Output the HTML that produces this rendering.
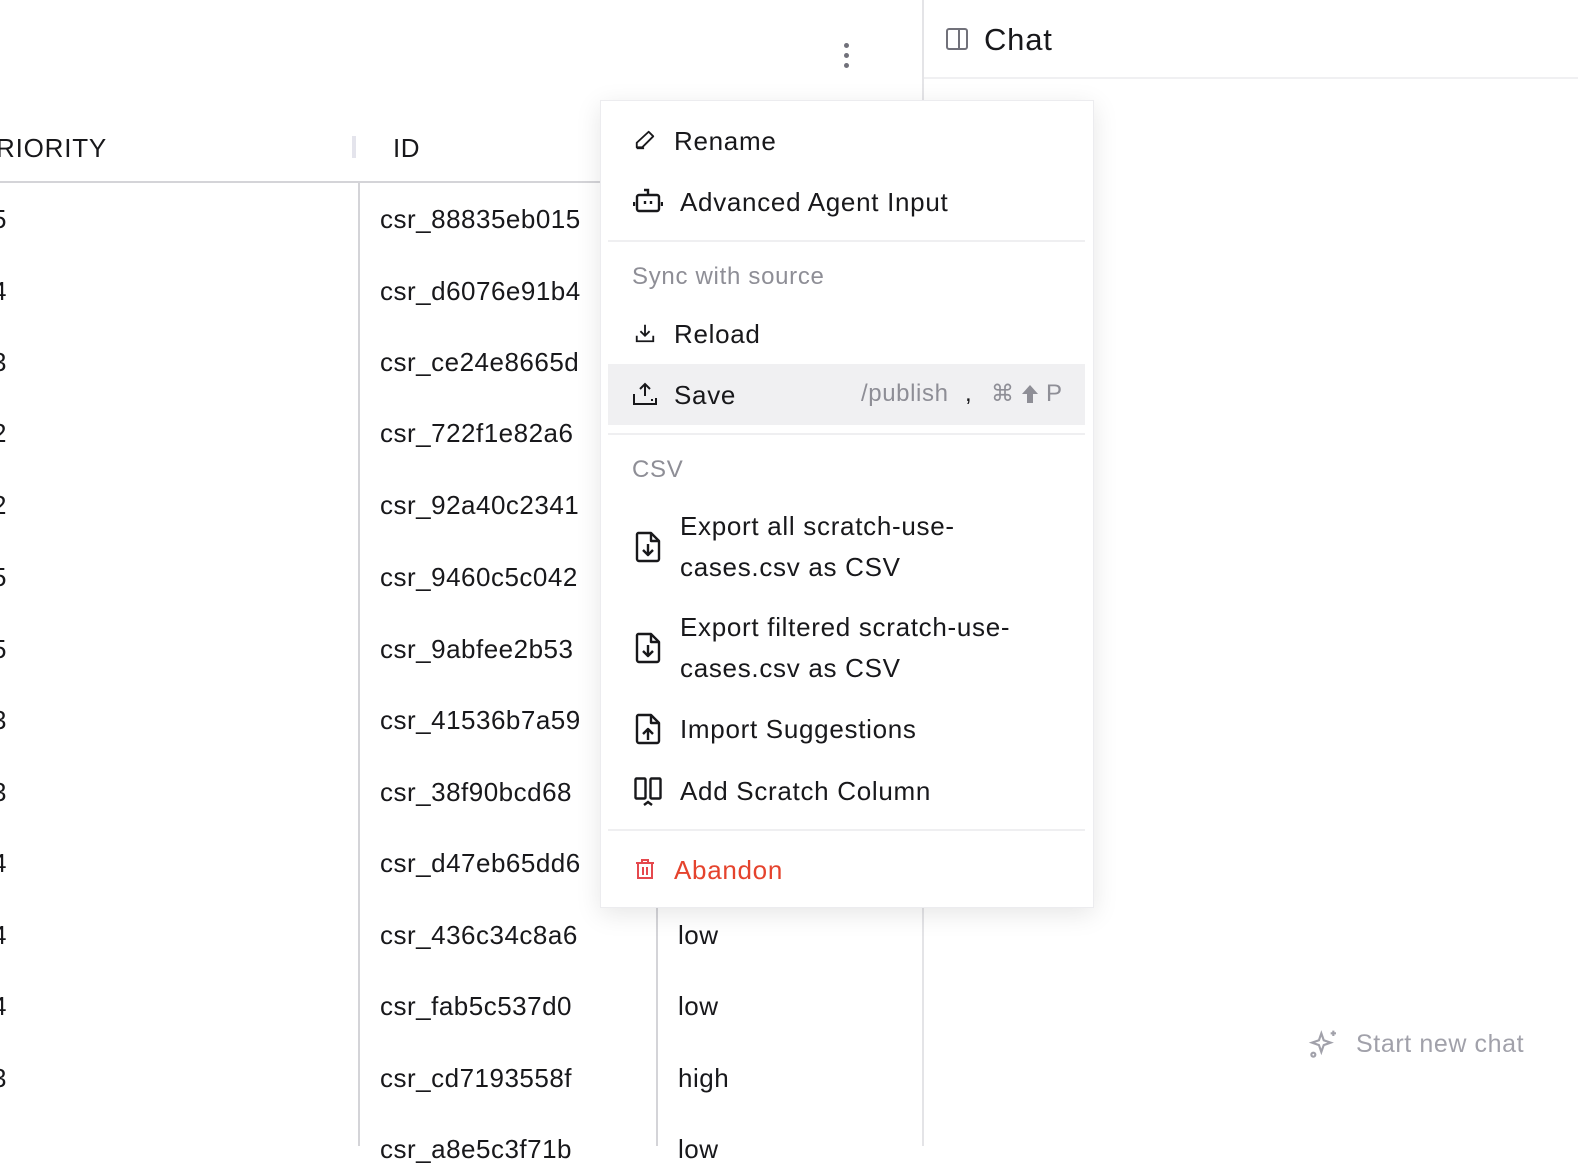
<!DOCTYPE html>
<html><head><meta charset="utf-8"><style>
*{box-sizing:border-box;margin:0;padding:0}
body{width:1578px;height:1146px;overflow:hidden;background:#fff;font-family:"Liberation Sans",sans-serif;color:#18181b;position:relative}
.a{position:absolute;white-space:nowrap}
.t{font-size:26px;letter-spacing:0.5px}
.mi{position:absolute;left:608px;width:477px;font-size:26px;letter-spacing:0.7px;color:#18181b}
svg{position:absolute}
</style></head><body>
<!-- table -->
<div class="a t" style="left:-4px;top:133px;letter-spacing:0.8px">RIORITY</div>
<div class="a" style="left:352px;top:136px;width:4px;height:22px;background:#e4e4ec"></div>
<div class="a t" style="left:393px;top:133px">ID</div>
<div class="a" style="left:0;top:181px;width:600px;height:2px;background:#d4d4d8"></div>
<div class="a" style="left:358px;top:183px;width:2px;height:963px;background:#d4d4d8"></div>
<div class="a" style="left:656px;top:900px;width:2px;height:246px;background:#d4d4d8"></div>
<div class="a" style="left:922px;top:0;width:2px;height:1146px;background:#e4e4e7"></div>
<div class="a t" style="left:380px;top:204px">csr_88835eb015</div>
<div class="a t" style="left:380px;top:276px">csr_d6076e91b4</div>
<div class="a t" style="left:380px;top:347px">csr_ce24e8665d</div>
<div class="a t" style="left:380px;top:418px">csr_722f1e82a6</div>
<div class="a t" style="left:380px;top:490px">csr_92a40c2341</div>
<div class="a t" style="left:380px;top:562px">csr_9460c5c042</div>
<div class="a t" style="left:380px;top:634px">csr_9abfee2b53</div>
<div class="a t" style="left:380px;top:705px">csr_41536b7a59</div>
<div class="a t" style="left:380px;top:777px">csr_38f90bcd68</div>
<div class="a t" style="left:380px;top:848px">csr_d47eb65dd6</div>
<div class="a t" style="left:380px;top:920px">csr_436c34c8a6</div>
<div class="a t" style="left:380px;top:991px">csr_fab5c537d0</div>
<div class="a t" style="left:380px;top:1063px">csr_cd7193558f</div>
<div class="a t" style="left:380px;top:1134px">csr_a8e5c3f71b</div>
<div class="a t" style="left:-8px;top:204px">5</div>
<div class="a t" style="left:-8px;top:276px">4</div>
<div class="a t" style="left:-8px;top:347px">3</div>
<div class="a t" style="left:-8px;top:418px">2</div>
<div class="a t" style="left:-8px;top:490px">2</div>
<div class="a t" style="left:-8px;top:562px">5</div>
<div class="a t" style="left:-8px;top:634px">5</div>
<div class="a t" style="left:-8px;top:705px">3</div>
<div class="a t" style="left:-8px;top:777px">3</div>
<div class="a t" style="left:-8px;top:848px">4</div>
<div class="a t" style="left:-8px;top:920px">4</div>
<div class="a t" style="left:-8px;top:991px">4</div>
<div class="a t" style="left:-8px;top:1063px">3</div>
<div class="a t" style="left:678px;top:920px">low</div>
<div class="a t" style="left:678px;top:991px">low</div>
<div class="a t" style="left:678px;top:1063px">high</div>
<div class="a t" style="left:678px;top:1134px">low</div>
<!-- kebab -->
<div class="a" style="left:844px;top:43px;width:5px;height:5px;border-radius:50%;background:#71717a"></div>
<div class="a" style="left:844px;top:53px;width:5px;height:5px;border-radius:50%;background:#71717a"></div>
<div class="a" style="left:844px;top:63px;width:5px;height:5px;border-radius:50%;background:#71717a"></div>
<!-- chat -->
<svg style="left:945px;top:27px" width="24" height="24" viewBox="0 0 24 24" fill="none" stroke="#71717a" stroke-width="2"><rect x="2" y="2" width="20" height="20" rx="2"/><line x1="14" y1="2" x2="14" y2="22"/></svg>
<div class="a" style="left:984px;top:22px;font-size:31px;font-weight:500;letter-spacing:0.8px">Chat</div>
<div class="a" style="left:924px;top:77px;width:654px;height:2px;background:#f0f0f2"></div>
<svg style="left:1308px;top:1028px" width="32" height="32" viewBox="0 0 24 24" fill="none" stroke="#a1a1aa" stroke-width="1.6"><path d="M10 4l1.8 5.2L17 11l-5.2 1.8L10 18l-1.8-5.2L3 11l5.2-1.8z"/><path d="M19 2v4M17 4h4"/><circle cx="4" cy="20" r="1.5"/></svg>
<div class="a" style="left:1356px;top:1030px;font-size:25px;color:#a1a1aa;font-weight:500;letter-spacing:0.6px">Start new chat</div>
<!-- menu -->
<div class="a" style="left:600px;top:100px;width:494px;height:808px;background:#fff;border:1px solid #ececef;box-shadow:0 6px 24px rgba(0,0,0,0.10)"></div>
<svg style="left:634px;top:129px" width="22" height="22" viewBox="0 0 24 24" fill="none" stroke="#18181b" stroke-width="2" stroke-linejoin="round"><path d="M16 3l5 5L9 20H3v-5z"/><path d="M3 21h8"/></svg>
<div class="mi" style="top:126px;padding-left:66px">Rename</div>
<svg style="left:633px;top:188px" width="30" height="26" viewBox="0 0 30 26" fill="none" stroke="#18181b" stroke-width="2.4"><rect x="4" y="7" width="22" height="16" rx="2"/><path d="M15 7V2h-4"/><path d="M1 14v4M29 14v4"/><path d="M12 13v3M18 13v3"/></svg>
<div class="mi" style="top:187px;padding-left:72px">Advanced Agent Input</div>
<div class="a" style="left:608px;top:240px;width:477px;height:2px;background:#efeff1"></div>
<div class="mi" style="top:263px;padding-left:24px;font-size:24px;color:#8e8e96">Sync with source</div>
<svg style="left:634px;top:322px" width="22" height="22" viewBox="0 0 24 24" fill="none" stroke="#18181b" stroke-width="2"><path d="M12 3v12M7 10l5 5 5-5M3 15v6h18v-6"/></svg>
<div class="mi" style="top:319px;padding-left:66px">Reload</div>
<div class="a" style="left:608px;top:364px;width:477px;height:61px;background:#f0f0f2"></div>
<svg style="left:632px;top:382px" width="26" height="24" viewBox="0 0 26 24" fill="none" stroke="#18181b" stroke-width="2"><path d="M13 14V2M8 7l5-5 5 5M2 12v10h22v-6"/><path d="M19 18h2"/></svg>
<div class="mi" style="top:380px;padding-left:66px">Save</div>
<div class="a" style="left:861px;top:380px;font-size:24px;color:#8e8e96;letter-spacing:0.6px">/publish</div>
<div class="a" style="left:965px;top:380px;font-size:24px;color:#18181b">,</div>
<div class="a" style="left:991px;top:380px;font-size:23px;color:#8e8e96">⌘</div>
<svg style="left:1020px;top:384px" width="20" height="20" viewBox="0 0 20 20"><path d="M10 1L2 10h5v9h6v-9h5z" fill="#8e8e96"/></svg>
<div class="a" style="left:1046px;top:380px;font-size:24px;color:#8e8e96">P</div>
<div class="a" style="left:608px;top:433px;width:477px;height:2px;background:#efeff1"></div>
<div class="mi" style="top:456px;padding-left:24px;font-size:24px;color:#8e8e96">CSV</div>
<svg style="left:634px;top:531px" width="28" height="32" viewBox="0 0 28 32" fill="none" stroke="#18181b" stroke-width="2.4" stroke-linejoin="round"><path d="M4 2h13l8 8v18a2 2 0 0 1-2 2H5a2 2 0 0 1-2-2V4a2 2 0 0 1 1-2z"/><path d="M17 2v8h8"/><path d="M14 13v11M9 19l5 5 5-5"/></svg>
<div class="mi" style="top:506px;padding-left:72px;line-height:41px">Export all scratch-use-<br>cases.csv as CSV</div>
<svg style="left:634px;top:632px" width="28" height="32" viewBox="0 0 28 32" fill="none" stroke="#18181b" stroke-width="2.4" stroke-linejoin="round"><path d="M4 2h13l8 8v18a2 2 0 0 1-2 2H5a2 2 0 0 1-2-2V4a2 2 0 0 1 1-2z"/><path d="M17 2v8h8"/><path d="M14 13v11M9 19l5 5 5-5"/></svg>
<div class="mi" style="top:607px;padding-left:72px;line-height:41px">Export filtered scratch-use-<br>cases.csv as CSV</div>
<svg style="left:634px;top:713px" width="28" height="32" viewBox="0 0 28 32" fill="none" stroke="#18181b" stroke-width="2.4" stroke-linejoin="round"><path d="M4 2h13l8 8v18a2 2 0 0 1-2 2H5a2 2 0 0 1-2-2V4a2 2 0 0 1 1-2z"/><path d="M17 2v8h8"/><path d="M14 27V16M9 21l5-5 5 5"/></svg>
<div class="mi" style="top:714px;padding-left:72px">Import Suggestions</div>
<svg style="left:634px;top:777px" width="28" height="30" viewBox="0 0 28 30" fill="none" stroke="#18181b" stroke-width="2.4"><rect x="1.5" y="1.5" width="10" height="20" rx="1"/><rect x="16.5" y="1.5" width="10" height="20" rx="1"/><path d="M10 28l4-3 4 3"/></svg>
<div class="mi" style="top:776px;padding-left:72px">Add Scratch Column</div>
<div class="a" style="left:608px;top:829px;width:477px;height:2px;background:#efeff1"></div>
<svg style="left:635px;top:858px" width="20" height="22" viewBox="0 0 20 22" fill="none" stroke="#e5484d" stroke-width="2"><path d="M1 5h18M7 5V2h6v3M3 5v15h14V5M8 9v8M12 9v8"/></svg>
<div class="mi" style="top:855px;padding-left:66px;color:#e5432d">Abandon</div>
</body></html>
